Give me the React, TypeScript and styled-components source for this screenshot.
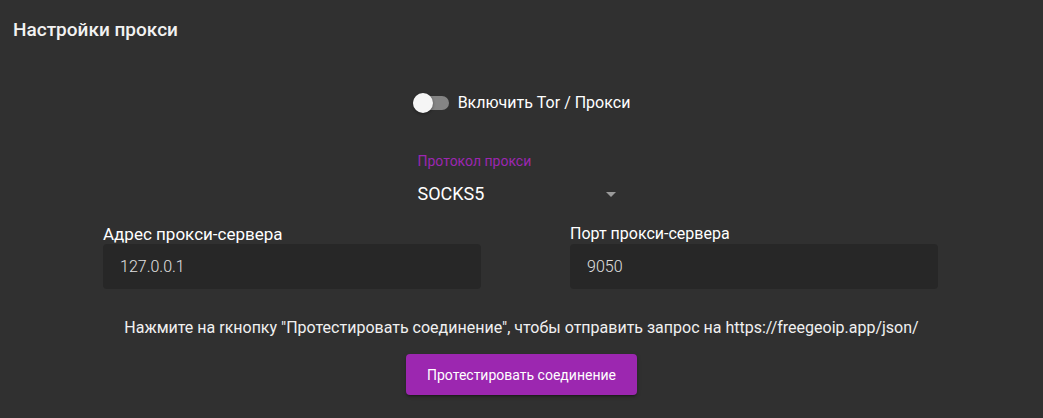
import React, { useState } from "react";
import styled, { createGlobalStyle } from "styled-components";

const Global = createGlobalStyle`
  html, body { margin: 0; padding: 0; background: #303030; }
  body { font-family: Roboto, "Noto Sans", sans-serif; color: #fff; }
  * { box-sizing: border-box; }
`;

const Page = styled.div`
  width: 1043px;
  height: 418px;
  background: #303030;
  display: flex;
  flex-direction: column;
  overflow: hidden;
`;

const Title = styled.h2`
  margin: 0;
  padding: 18px 13px 0;
  font-size: 19px;
  font-weight: 500;
  line-height: 24px;
  color: #f2f2f2;
`;

const Content = styled.div`
  display: flex;
  flex-direction: column;
  align-items: center;
`;

const SwitchRow = styled.label`
  margin-top: 51px;
  display: flex;
  align-items: center;
  gap: 9px;
  font-size: 16px;
  color: #fff;
  cursor: pointer;
`;

const Track = styled.span<{ $on: boolean }>`
  position: relative;
  width: 36px;
  height: 14px;
  border-radius: 7px;
  background: ${(p) => (p.$on ? "#c67fd2" : "#848484")};
  display: inline-block;
`;

const Thumb = styled.span<{ $on: boolean }>`
  position: absolute;
  top: -3px;
  left: ${(p) => (p.$on ? "16px" : "0px")};
  width: 20px;
  height: 20px;
  border-radius: 50%;
  background: ${(p) => (p.$on ? "#9c27b0" : "#f5f5f5")};
  box-shadow: 0 1px 3px rgba(0, 0, 0, 0.4);
`;

const SelectWrap = styled.div`
  margin-top: 41px;
  width: 208px;
  display: flex;
  flex-direction: column;
`;

const SelectLabel = styled.span`
  font-size: 14px;
  color: #9c27b0;
  line-height: 16px;
`;

const SelectValue = styled.div`
  margin-top: 14px;
  display: flex;
  align-items: center;
  justify-content: space-between;
  font-size: 18px;
  line-height: 22px;
  color: #fff;
  padding-right: 10px;
`;

const Caret = styled.span`
  width: 0;
  height: 0;
  border-left: 5px solid transparent;
  border-right: 5px solid transparent;
  border-top: 5px solid #9a9a9a;
`;

const FieldsRow = styled.div`
  margin-top: 19px;
  display: flex;
  gap: 89px;
  margin-right: 2px;
`;

const Field = styled.div<{ $w: number }>`
  width: ${(p) => p.$w}px;
  display: flex;
  flex-direction: column;
`;

const FieldLabel = styled.span<{ $size: number }>`
  font-size: ${(p) => p.$size}px;
  line-height: 20px;
  color: #fff;
`;

const Input = styled.input`
  height: 45px;
  border: none;
  outline: none;
  border-radius: 4px;
  background: #272727;
  color: #e0e0e0;
  font-family: Roboto, sans-serif;
  font-weight: 300;
  font-size: 16px;
  padding: 0 17px;
`;

const Description = styled.p`
  margin: 29px 0 0;
  font-size: 16px;
  line-height: 20px;
  color: #f0f0f0;
`;

const Button = styled.button`
  margin-top: 16px;
  width: 231px;
  height: 41px;
  border: none;
  border-radius: 4px;
  background: #9c27b0;
  color: #fff;
  font-family: Roboto, sans-serif;
  font-size: 14px;
  box-shadow: 0 3px 1px -2px rgba(0,0,0,0.2), 0 2px 2px 0 rgba(0,0,0,0.14), 0 1px 5px 0 rgba(0,0,0,0.12);
  cursor: pointer;
`;

export default function App() {
  const [on, setOn] = useState(false);
  return (
    <Page>
      <Global />
      <Title>Настройки прокси</Title>
      <Content>
        <SwitchRow onClick={() => setOn(!on)}>
          <Track $on={on}>
            <Thumb $on={on} />
          </Track>
          Включить Tor / Прокси
        </SwitchRow>
        <SelectWrap>
          <SelectLabel>Протокол прокси</SelectLabel>
          <SelectValue>
            SOCKS5
            <Caret />
          </SelectValue>
        </SelectWrap>
        <FieldsRow>
          <Field $w={378}>
            <FieldLabel $size={17}>Адрес прокси-сервера</FieldLabel>
            <Input defaultValue="127.0.0.1" />
          </Field>
          <Field $w={368}>
            <FieldLabel $size={16}>Порт прокси-сервера</FieldLabel>
            <Input defaultValue="9050" />
          </Field>
        </FieldsRow>
        <Description>
          Нажмите на rкнопку "Протестировать соединение", чтобы отправить запрос на https://freegeoip.app/json/
        </Description>
        <Button>Протестировать соединение</Button>
      </Content>
    </Page>
  );
}
